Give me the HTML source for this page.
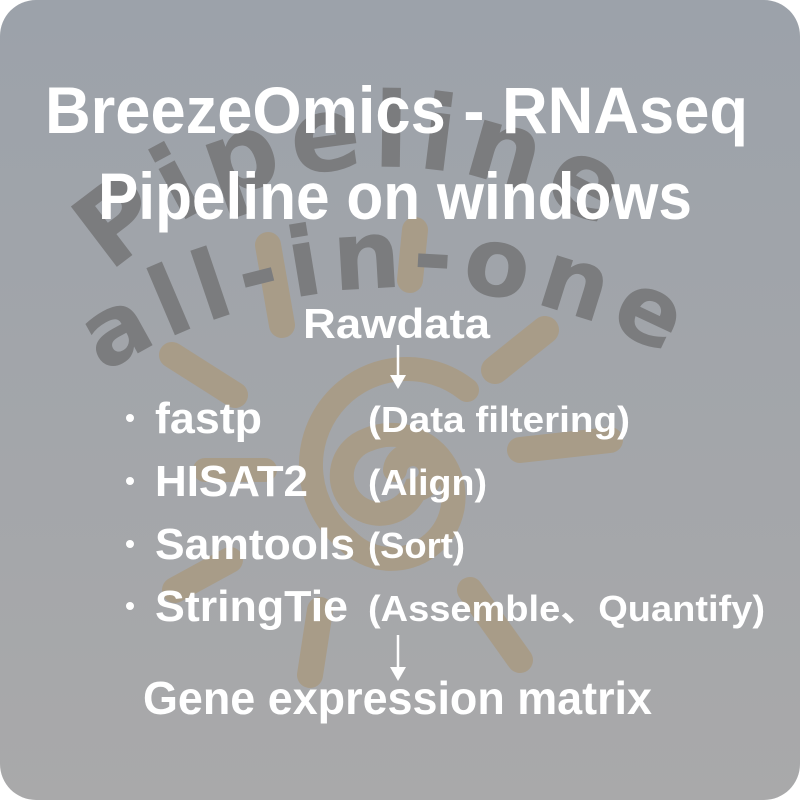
<!DOCTYPE html>
<html><head><meta charset="utf-8"><style>
html,body{margin:0;padding:0;background:#fff;}
svg{display:block;}
</style></head><body>
<svg width="800" height="800" viewBox="0 0 800 800" xmlns="http://www.w3.org/2000/svg">
<defs>
<linearGradient id="bg" x1="0" y1="0" x2="0" y2="1">
<stop offset="0" stop-color="#9ca2aa"/><stop offset="1" stop-color="#a9a9aa"/>
</linearGradient>
<path id="arc1" d="M 60 330 A 405 405 0 0 1 710 330"/>
<path id="arc2" d="M 40 420 A 556 556 0 0 1 760 420"/>
</defs>
<rect x="0" y="0" width="800" height="800" rx="36" fill="url(#bg)"/>
<!-- sun -->
<g stroke="#a89c88" stroke-linecap="round" fill="none">
<path d="M395 470 a18 18 0 1 1 20 20 a38 38 0 1 1 -48 -50 a62 62 0 1 1 -20 100 a88 88 0 1 1 120 -150" stroke-width="24"/>
<line x1="268" y1="245" x2="282" y2="325" stroke-width="26"/>
<line x1="415" y1="230" x2="410" y2="280" stroke-width="26"/>
<line x1="545" y1="330" x2="495" y2="370" stroke-width="28"/>
<line x1="172" y1="355" x2="235" y2="395" stroke-width="26"/>
<line x1="520" y1="450" x2="610" y2="440" stroke-width="26"/>
<line x1="230" y1="560" x2="175" y2="590" stroke-width="26"/>
<line x1="320" y1="610" x2="310" y2="675" stroke-width="26"/>
<line x1="470" y1="590" x2="520" y2="660" stroke-width="26"/>
<line x1="265" y1="470" x2="205" y2="470" stroke-width="24"/>
</g>
<!-- watermark -->
<g fill="#7b7c7e" font-family="'DejaVu Sans','Liberation Sans',sans-serif" font-weight="bold">
<text font-size="104"><textPath href="#arc1" startOffset="10%" textLength="530" lengthAdjust="spacing">Pipeline</textPath></text>
<text font-size="96"><textPath href="#arc2" startOffset="10%" textLength="590" lengthAdjust="spacing">all-in-one</textPath></text>
</g>
<g fill="#fff" font-family="'Liberation Sans','Noto Sans CJK JP',sans-serif" font-weight="bold">
<text x="45" y="133" font-size="66" textLength="703" lengthAdjust="spacingAndGlyphs">BreezeOmics - RNAseq</text>
<text x="98" y="219" font-size="66" textLength="594" lengthAdjust="spacingAndGlyphs">Pipeline on windows</text>
<text x="303" y="338" font-size="42" textLength="187" lengthAdjust="spacingAndGlyphs">Rawdata</text>
<g font-size="44">
<circle cx="130" cy="418" r="4"/><text x="155" y="433" textLength="107" lengthAdjust="spacingAndGlyphs">fastp</text>
<circle cx="130" cy="481" r="4"/><text x="155" y="496" textLength="153" lengthAdjust="spacingAndGlyphs">HISAT2</text>
<circle cx="130" cy="544" r="4"/><text x="155" y="559" textLength="200" lengthAdjust="spacingAndGlyphs">Samtools</text>
<circle cx="130" cy="606" r="4"/><text x="155" y="621" textLength="193" lengthAdjust="spacingAndGlyphs">StringTie</text>
</g>
<g font-size="36">
<text x="368" y="432" textLength="262" lengthAdjust="spacingAndGlyphs">(Data filtering)</text>
<text x="368" y="495" textLength="119" lengthAdjust="spacingAndGlyphs">(Align)</text>
<text x="368" y="558" textLength="97" lengthAdjust="spacingAndGlyphs">(Sort)</text>
<text x="368" y="621" textLength="397" lengthAdjust="spacingAndGlyphs">(Assemble、Quantify)</text>
</g>
<text x="143" y="714" font-size="46" textLength="509" lengthAdjust="spacingAndGlyphs">Gene expression matrix</text>
</g>
<g stroke="#fff" stroke-width="2.5" fill="#fff">
<line x1="398" y1="345" x2="398" y2="378"/><path d="M390 375 L406 375 L398 389 Z" stroke="none"/>
<line x1="398" y1="635" x2="398" y2="670"/><path d="M390 667 L406 667 L398 681 Z" stroke="none"/>
</g>
</svg>
</body></html>
